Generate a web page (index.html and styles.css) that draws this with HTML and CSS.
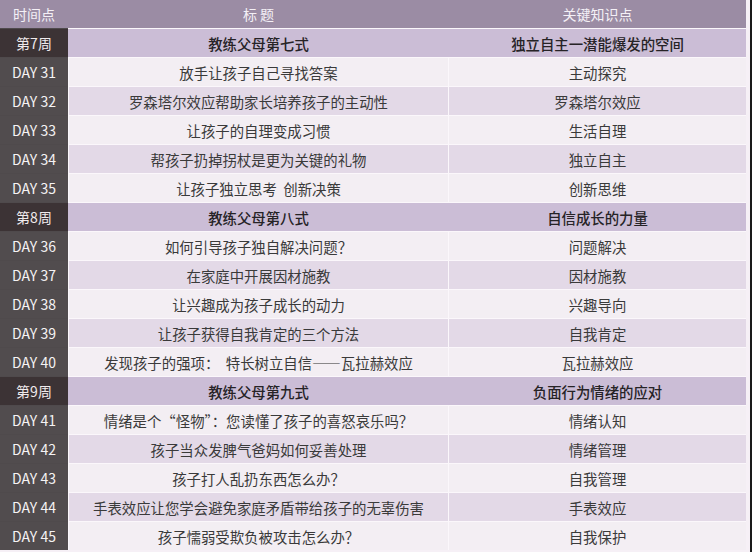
FILE: index.html
```html
<!DOCTYPE html>
<html lang="zh">
<head>
<meta charset="utf-8">
<link rel="stylesheet" href="styles.css">
</head>
<body>
<div class="page">
  <div class="table">
    <div class="row head"><div class="c">时间点</div><div class="c">标 题</div><div class="c">关键知识点</div></div>

    <div class="row week"><div class="c lab">第7周</div><div class="c">教练父母第七式</div><div class="c">独立自主一潜能爆发的空间</div></div>
    <div class="row day lt"><div class="c lab">DAY 31</div><div class="c">放手让孩子自己寻找答案</div><div class="c">主动探究</div></div>
    <div class="row day pu"><div class="c lab">DAY 32</div><div class="c">罗森塔尔效应帮助家长培养孩子的主动性</div><div class="c">罗森塔尔效应</div></div>
    <div class="row day lt"><div class="c lab">DAY 33</div><div class="c">让孩子的自理变成习惯</div><div class="c">生活自理</div></div>
    <div class="row day pu"><div class="c lab">DAY 34</div><div class="c">帮孩子扔掉拐杖是更为关键的礼物</div><div class="c">独立自主</div></div>
    <div class="row day lt"><div class="c lab">DAY 35</div><div class="c">让孩子独立思考&nbsp;&nbsp;创新决策</div><div class="c">创新思维</div></div>

    <div class="row week"><div class="c lab">第8周</div><div class="c">教练父母第八式</div><div class="c">自信成长的力量</div></div>
    <div class="row day lt"><div class="c lab">DAY 36</div><div class="c">如何引导孩子独自解决问题？</div><div class="c">问题解决</div></div>
    <div class="row day pu"><div class="c lab">DAY 37</div><div class="c">在家庭中开展因材施教</div><div class="c">因材施教</div></div>
    <div class="row day lt"><div class="c lab">DAY 38</div><div class="c">让兴趣成为孩子成长的动力</div><div class="c">兴趣导向</div></div>
    <div class="row day pu"><div class="c lab">DAY 39</div><div class="c">让孩子获得自我肯定的三个方法</div><div class="c">自我肯定</div></div>
    <div class="row day lt"><div class="c lab">DAY 40</div><div class="c">发现孩子的强项：&nbsp;&nbsp;特长树立自信——瓦拉赫效应</div><div class="c">瓦拉赫效应</div></div>

    <div class="row week"><div class="c lab">第9周</div><div class="c">教练父母第九式</div><div class="c">负面行为情绪的应对</div></div>
    <div class="row day lt"><div class="c lab">DAY 41</div><div class="c">情绪是个“怪物”：您读懂了孩子的喜怒哀乐吗？</div><div class="c">情绪认知</div></div>
    <div class="row day pu"><div class="c lab">DAY 42</div><div class="c">孩子当众发脾气爸妈如何妥善处理</div><div class="c">情绪管理</div></div>
    <div class="row day lt"><div class="c lab">DAY 43</div><div class="c">孩子打人乱扔东西怎么办？</div><div class="c">自我管理</div></div>
    <div class="row day pu"><div class="c lab">DAY 44</div><div class="c">手表效应让您学会避免家庭矛盾带给孩子的无辜伤害</div><div class="c">手表效应</div></div>
    <div class="row day lt"><div class="c lab">DAY 45</div><div class="c">孩子懦弱受欺负被攻击怎么办？</div><div class="c">自我保护</div></div>
  </div>
</div>
</body>
</html>
```
FILE: styles.css
```css
html, body {
  margin: 0;
  padding: 0;
}
body {
  width: 752px;
  height: 552px;
  overflow: hidden;
  background: #f4eff4;
  font-family: "Noto Sans CJK SC", "Noto Sans", sans-serif;
}
.page {
  width: 750px;
  height: 552px;
  border-right: 2px solid #1a1a1a;
  background: #f6f0f6;
}
.table {
  width: 746px;
  display: flex;
  flex-direction: column;
  gap: 1px;
  background: linear-gradient(to right, #4f4a4c 68px, #fbf7fb 68px);
}
.row {
  display: grid;
  grid-template-columns: 68px 379px 297px;
  column-gap: 1px;
  height: 28px;
}
.c {
  display: flex;
  align-items: center;
  justify-content: center;
  font-size: 14.4px;
  white-space: nowrap;
  color: #3a3a3a;
}
.head {
  background: #9b8ca4;
}
.head .c {
  color: #f4f0f6;
  font-size: 14px;
}
.week {
  background: #cbbdd6;
}
.week .c {
  color: #262326;
  font-weight: 500;
}
.week .c.lab {
  background: #3c3335;
  color: #efeaec;
  font-weight: 400;
  font-size: 14px;
}
.day .c.lab {
  background: #514c4e;
  color: #f5f3f4;
  font-size: 14px;
}
.lt .c:not(.lab) {
  background: #f3eef3;
}
.pu .c:not(.lab) {
  background: #e3d9e7;
}
```
